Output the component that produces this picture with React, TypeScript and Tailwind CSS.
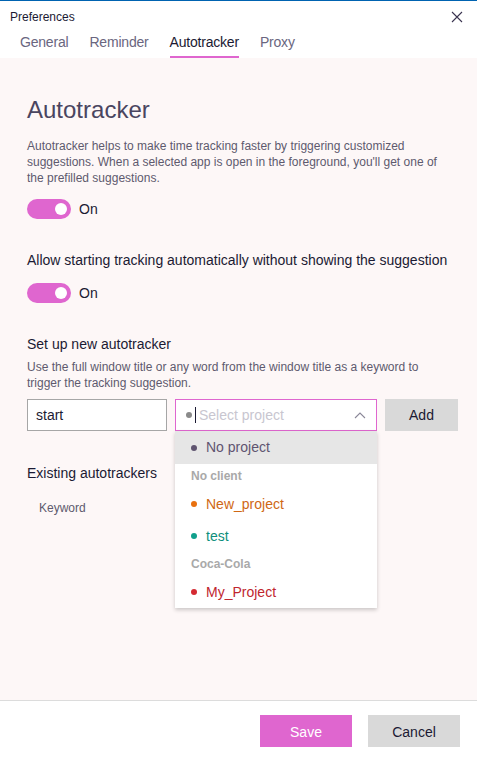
import React from 'react';

const font = { fontFamily: '"Liberation Sans", Arial, sans-serif' };

const Toggle = () => (
  <div className="flex items-center gap-2">
    <div className="w-[44px] h-[20px] rounded-full bg-[#df66cf] flex items-center justify-end pr-[4px]">
      <div className="w-[12px] h-[12px] rounded-full bg-white" />
    </div>
    <span className="text-[14px] text-[#1b1a33] leading-none">On</span>
  </div>
);

const Option = ({ label, color, dot }: { label: string; color: string; dot: string }) => (
  <div className="h-[32px] flex items-center px-[16px] gap-[9px]">
    <span className={`w-[6px] h-[6px] rounded-full ${dot}`} />
    <span className={`text-[14px] ${color}`}>{label}</span>
  </div>
);

export default function App() {
  return (
    <div className="w-[477px] h-[761px] bg-white flex flex-col border-t border-[#0063b1] overflow-hidden" style={font}>
      <div className="flex items-center justify-between pl-[10px] pr-[14px] h-[31px]">
        <span className="text-[12px] text-[#1b1a33]">Preferences</span>
        <svg width="12" height="12" viewBox="0 0 12 12" className="text-[#3b3450]">
          <path d="M1 1L11 11M11 1L1 11" stroke="currentColor" strokeWidth="1.1" />
        </svg>
      </div>
      <div className="flex gap-[21px] pl-[20px] h-[26px] shadow-[0_1px_2px_rgba(0,0,0,0.04)] tracking-[-0.2px]">
        <span className="text-[14px] text-[#6a6680]">General</span>
        <span className="text-[14px] text-[#6a6680]">Reminder</span>
        <span className="text-[14px] text-[#1b1a33] border-b-2 border-[#df66cf] h-[26px]">Autotracker</span>
        <span className="text-[14px] text-[#6a6680]">Proxy</span>
      </div>
      <div className="flex-1 bg-[#fdf7f7] pl-[27px] pr-[20px] pt-[36px] border-b border-[#dcdcdc]">
        <h1 className="text-[24px] font-light text-[#4a4560] leading-[32px]">Autotracker</h1>
        <p className="mt-[12px] text-[12px] leading-[16px] text-[#5e5a6e] pr-[20px]">
          Autotracker helps to make time tracking faster by triggering customized suggestions. When a selected app is open in the foreground, you'll get one of the prefilled suggestions.
        </p>
        <div className="mt-[13px]"><Toggle /></div>
        <p className="mt-[31px] text-[14px] text-[#1b1a33] leading-[20px]">Allow starting tracking automatically without showing the suggestion</p>
        <div className="mt-[13px]"><Toggle /></div>
        <p className="mt-[31px] text-[14px] text-[#1b1a33] leading-[20px]">Set up new autotracker</p>
        <p className="mt-[5px] text-[12px] leading-[16px] text-[#5e5a6e] pr-[20px]">
          Use the full window title or any word from the window title as a keyword to trigger the tracking suggestion.
        </p>
        <div className="mt-[8px] flex gap-[8px] items-start">
          <div className="w-[140px] h-[32px] border border-[#a6a6a6] bg-white flex items-center px-[8px] text-[14px] text-[#1b1a33] shrink-0">start</div>
          <div className="relative w-[202px] shrink-0">
            <div className="h-[32px] border border-[#df66cf] bg-white flex items-center pl-[10px] pr-[10px] gap-[3px]">
              <span className="w-[6px] h-[6px] rounded-full bg-[#8a8a8a]" />
              <span className="w-[1px] h-[16px] bg-[#1b1a33]" />
              <span className="text-[14px] text-[#c8c6d0] flex-1">Select project</span>
              <svg width="12" height="8" viewBox="0 0 12 8" className="text-[#8a8798]">
                <path d="M1 7L6 2L11 7" fill="none" stroke="currentColor" strokeWidth="1.1" />
              </svg>
            </div>
            <div className="absolute left-0 top-[32px] w-[202px] bg-white shadow-[0_2px_4px_rgba(0,0,0,0.2)] z-10">
              <div className="h-[33px] bg-[#e6e6e6] flex items-center px-[16px] gap-[9px]">
                <span className="w-[6px] h-[6px] rounded-full bg-[#5f5470]" />
                <span className="text-[14px] text-[#5f5470]">No project</span>
              </div>
              <div className="h-[24px] flex items-center px-[16px] text-[12px] font-semibold text-[#a9a9a9]">No client</div>
              <Option label="New_project" color="text-[#cf6714]" dot="bg-[#e8700f]" />
              <Option label="test" color="text-[#0e8f7c]" dot="bg-[#11a08c]" />
              <div className="h-[24px] flex items-center px-[16px] text-[12px] font-semibold text-[#a9a9a9]">Coca-Cola</div>
              <Option label="My_Project" color="text-[#c0262e]" dot="bg-[#d42a32]" />
            </div>
          </div>
          <div className="w-[73px] h-[32px] bg-[#d9d9d9] flex items-center justify-center text-[14px] text-[#1b1a33] shrink-0">Add</div>
        </div>
        <p className="mt-[32px] text-[14px] text-[#1b1a33] leading-[20px]">Existing autotrackers</p>
        <p className="mt-[16px] ml-[12px] text-[12px] text-[#5e5a6e]">Keyword</p>
      </div>
      <div className="h-[60px] flex items-start justify-end gap-[16px] pr-[17px] pt-[14px]">
        <div className="w-[92px] h-[32px] bg-[#df66cf] flex items-center justify-center text-[14px] text-white pt-[2px]">Save</div>
        <div className="w-[92px] h-[32px] bg-[#d9d9d9] flex items-center justify-center text-[14px] text-[#1b1a33] pt-[2px]">Cancel</div>
      </div>
    </div>
  );
}
